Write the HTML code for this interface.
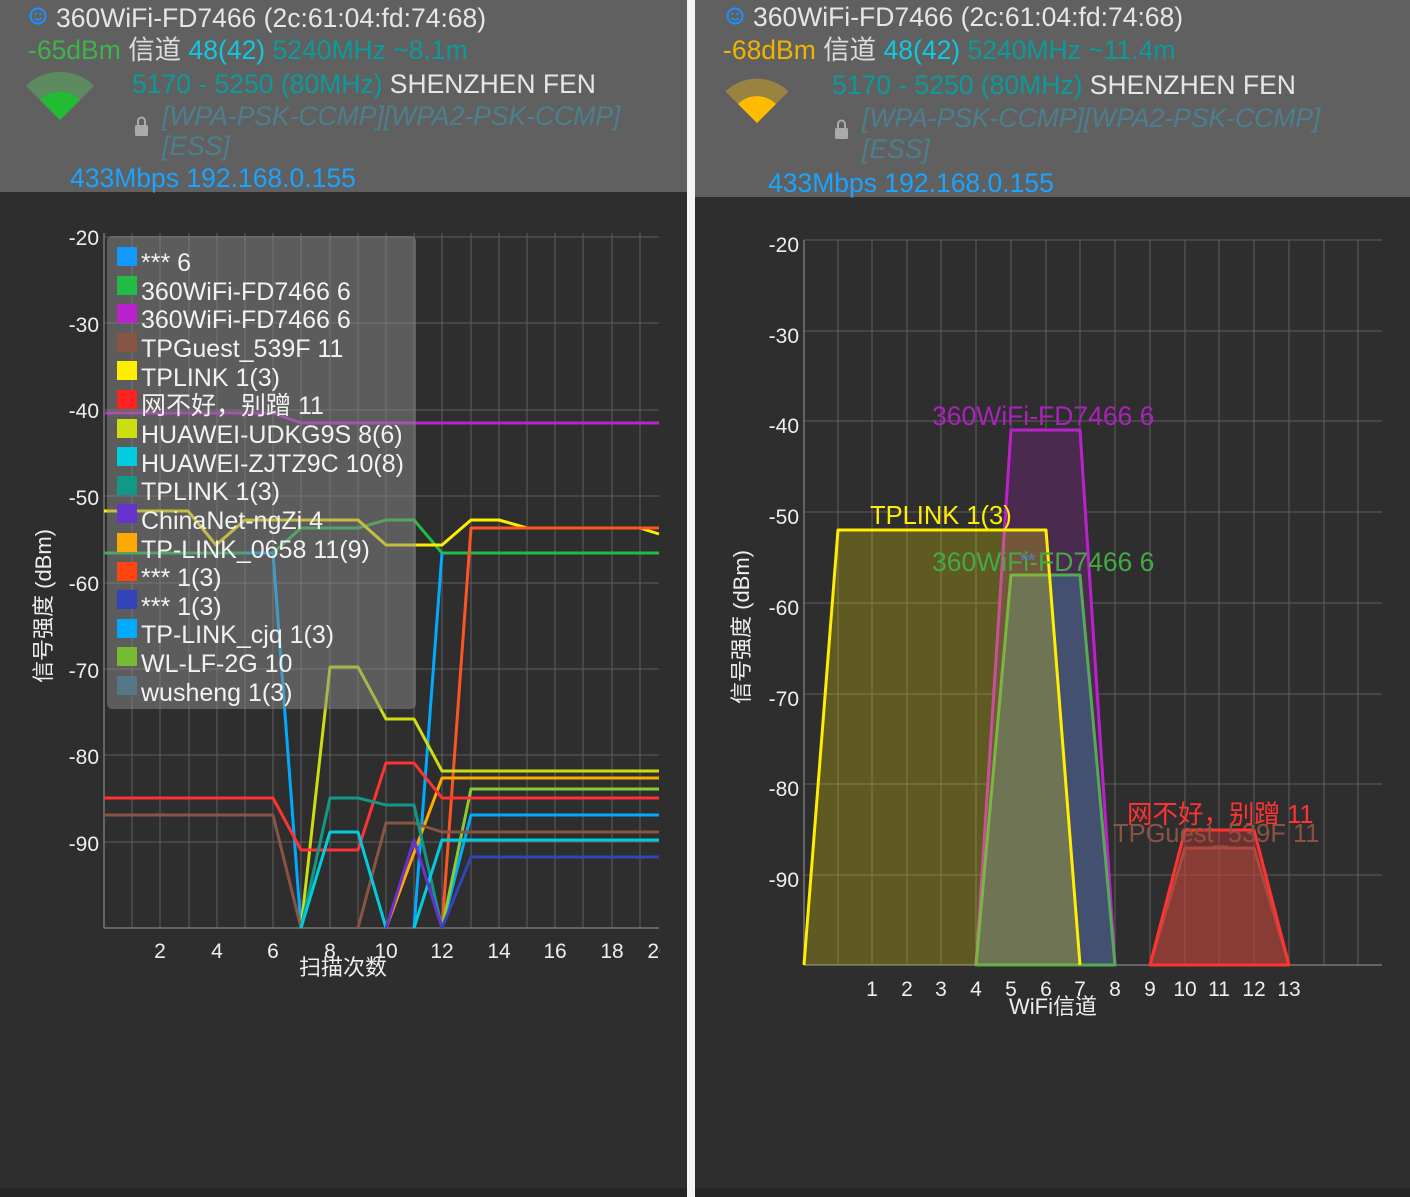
<!DOCTYPE html>
<html><head><meta charset="utf-8"><style>
html,body{margin:0;padding:0;background:#2e2e2e;}
svg{display:block;font-family:"Liberation Sans","Noto Sans CJK SC",sans-serif;}
</style></head><body>
<svg width="1410" height="1197" viewBox="0 0 1410 1197" xmlns="http://www.w3.org/2000/svg">
<rect x="0" y="0" width="1410" height="1197" fill="#2e2e2e"/>
<rect x="0" y="1188" width="1410" height="9" fill="#262626"/>
<rect x="687" y="0" width="8" height="1197" fill="#f4f4f4"/>
<rect x="0" y="0" width="687" height="192" fill="#606060"/>
<rect x="695" y="0" width="715" height="197" fill="#606060"/>

<g font-size="26.5">
<circle cx="38" cy="16" r="7.5" fill="none" stroke="#1e90ff" stroke-width="2"/>
<circle cx="35.5" cy="14" r="1.2" fill="#1e90ff"/><circle cx="40.5" cy="14" r="1.2" fill="#1e90ff"/>
<path d="M34.5 18 Q38 21.5 41.5 18" stroke="#1e90ff" stroke-width="1.6" fill="none"/>
<text x="56" y="27" fill="#e6e6e6">360WiFi-FD7466 (2c:61:04:fd:74:68)</text>
<text x="28" y="59"><tspan fill="#3cb44a">-65dBm</tspan><tspan fill="#dddddd"> 信道 </tspan><tspan fill="#10c8e0">48(42)</tspan><tspan fill="#0c9a9a"> 5240MHz ~8.1m</tspan></text>
<path d="M60 120 L26 86 A48 48 0 0 1 94 86 Z" fill="#5e8a60"/>
<path d="M60 120 L40 100 A28 28 0 0 1 80 100 Z" fill="#22bb33"/>
<text x="132" y="93"><tspan fill="#0c9a9a">5170 - 5250 (80MHz)</tspan><tspan fill="#e6e6e6"> SHENZHEN FEN</tspan></text>
<rect x="135" y="125" width="13" height="11" rx="1.5" fill="#aaaaaa"/>
<path d="M138 125 V121 A3.5 3.5 0 0 1 145 121 V125" stroke="#aaaaaa" stroke-width="2" fill="none"/>
<text x="162" y="125" fill="#4c7f8e" font-style="italic">[WPA-PSK-CCMP][WPA2-PSK-CCMP]</text>
<text x="162" y="155" fill="#4c7f8e" font-style="italic">[ESS]</text>
<text x="70" y="187" fill="#1aa3ff">433Mbps 192.168.0.155</text>

<circle cx="735" cy="16" r="7.5" fill="none" stroke="#1e90ff" stroke-width="2"/>
<circle cx="732.5" cy="14" r="1.2" fill="#1e90ff"/><circle cx="737.5" cy="14" r="1.2" fill="#1e90ff"/>
<path d="M731.5 18 Q735 21.5 738.5 18" stroke="#1e90ff" stroke-width="1.6" fill="none"/>
<text x="753" y="26" fill="#e6e6e6">360WiFi-FD7466 (2c:61:04:fd:74:68)</text>
<text x="723" y="59"><tspan fill="#f0b400">-68dBm</tspan><tspan fill="#dddddd"> 信道 </tspan><tspan fill="#10c8e0">48(42)</tspan><tspan fill="#0c9a9a"> 5240MHz ~11.4m</tspan></text>
<path d="M757 123 L725.5 91.5 A45 45 0 0 1 788.5 91.5 Z" fill="#9a8340"/>
<path d="M757 123 L738 104 A27 27 0 0 1 776 104 Z" fill="#ffbb00"/>
<text x="832" y="94"><tspan fill="#0c9a9a">5170 - 5250 (80MHz)</tspan><tspan fill="#e6e6e6"> SHENZHEN FEN</tspan></text>
<rect x="835" y="128" width="13" height="11" rx="1.5" fill="#aaaaaa"/>
<path d="M838 128 V124 A3.5 3.5 0 0 1 845 124 V128" stroke="#aaaaaa" stroke-width="2" fill="none"/>
<text x="862" y="127" fill="#4c7f8e" font-style="italic">[WPA-PSK-CCMP][WPA2-PSK-CCMP]</text>
<text x="862" y="158" fill="#4c7f8e" font-style="italic">[ESS]</text>
<text x="768" y="192" fill="#1aa3ff">433Mbps 192.168.0.155</text>
</g>

<g stroke="#5e5e5e" stroke-width="1">
<line x1="104" y1="237" x2="659" y2="237"/><line x1="104" y1="323" x2="659" y2="323"/>
<line x1="104" y1="410" x2="659" y2="410"/><line x1="104" y1="496" x2="659" y2="496"/>
<line x1="104" y1="583" x2="659" y2="583"/><line x1="104" y1="669" x2="659" y2="669"/>
<line x1="104" y1="755" x2="659" y2="755"/><line x1="104" y1="842" x2="659" y2="842"/>
<line x1="132" y1="233" x2="132" y2="928"/><line x1="160" y1="233" x2="160" y2="928"/>
<line x1="189" y1="233" x2="189" y2="928"/><line x1="217" y1="233" x2="217" y2="928"/>
<line x1="245" y1="233" x2="245" y2="928"/><line x1="273" y1="233" x2="273" y2="928"/>
<line x1="301" y1="233" x2="301" y2="928"/><line x1="330" y1="233" x2="330" y2="928"/>
<line x1="358" y1="233" x2="358" y2="928"/><line x1="386" y1="233" x2="386" y2="928"/>
<line x1="414" y1="233" x2="414" y2="928"/><line x1="442" y1="233" x2="442" y2="928"/>
<line x1="471" y1="233" x2="471" y2="928"/><line x1="499" y1="233" x2="499" y2="928"/>
<line x1="527" y1="233" x2="527" y2="928"/><line x1="555" y1="233" x2="555" y2="928"/>
<line x1="583" y1="233" x2="583" y2="928"/><line x1="612" y1="233" x2="612" y2="928"/>
<line x1="640" y1="233" x2="640" y2="928"/>
</g>
<g stroke="#777" stroke-width="1.5"><line x1="104" y1="233" x2="104" y2="928"/><line x1="104" y1="928" x2="659" y2="928"/></g>

<g fill="none" stroke-width="3" stroke-linejoin="round">
<polyline stroke="#bb22cc" points="104,413 273,413 301,423 659,423"/>
<polyline stroke="#22bb44" points="104,553 273,553 301,528 358,528 386,520 414,520 442,553 659,553"/>
<polyline stroke="#ffee00" points="104,511 188,511 216,545 245,520 358,520 386,545 442,545 471,520 499,520 527,528 640,528 659,534"/>
<polyline stroke="#00aaff" points="245,553 273,553 301,928"/>
<polyline stroke="#00aaff" points="414,928 442,553"/>
<polyline stroke="#00aaff" points="442,928 471,815 659,815"/>
<polyline stroke="#ff5522" points="442,928 471,528 659,528"/>
<polyline stroke="#ccdd11" points="301,928 330,667 358,667 386,719 414,719 442,771 659,771"/>
<polyline stroke="#ffaa00" points="386,928 442,778 659,778"/>
<polyline stroke="#88cc33" points="442,928 471,789 659,789"/>
<polyline stroke="#ff3333" points="104,798 273,798 301,850 358,850 386,763 414,763 442,798 659,798"/>
<polyline stroke="#885544" points="104,815 273,815 301,928"/>
<polyline stroke="#885544" points="358,928 386,823 414,823 442,832 659,832"/>
<polyline stroke="#119988" points="301,928 330,798 358,798 386,805 414,805 442,928"/>
<polyline stroke="#00ccdd" points="301,928 330,832 358,832 386,928"/>
<polyline stroke="#00ccdd" points="414,928 442,840 659,840"/>
<polyline stroke="#6633cc" points="386,928 414,840 442,928"/>
<polyline stroke="#3344bb" points="442,928 471,857 659,857"/>
</g>

<rect x="107" y="236" width="309" height="473" rx="5" fill="#8a8a8a" fill-opacity="0.5"/>
<g font-size="25" fill="#f2f2f2">
<rect x="117" y="247" width="20" height="19" fill="#1199ff"/><text x="141" y="271">*** 6</text>
<rect x="117" y="276" width="20" height="19" fill="#22bb44"/><text x="141" y="300">360WiFi-FD7466 6</text>
<rect x="117" y="304" width="20" height="19" fill="#bb22cc"/><text x="141" y="328">360WiFi-FD7466 6</text>
<rect x="117" y="333" width="20" height="19" fill="#885544"/><text x="141" y="357">TPGuest_539F 11</text>
<rect x="117" y="361" width="20" height="19" fill="#ffee00"/><text x="141" y="386">TPLINK 1(3)</text>
<rect x="117" y="390" width="20" height="19" fill="#ff2222"/><text x="141" y="414">网不好，别蹭 11</text>
<rect x="117" y="419" width="20" height="19" fill="#ccdd11"/><text x="141" y="443">HUAWEI-UDKG9S 8(6)</text>
<rect x="117" y="447" width="20" height="19" fill="#00ccdd"/><text x="141" y="472">HUAWEI-ZJTZ9C 10(8)</text>
<rect x="117" y="476" width="20" height="19" fill="#119988"/><text x="141" y="500">TPLINK 1(3)</text>
<rect x="117" y="504" width="20" height="19" fill="#6633cc"/><text x="141" y="529">ChinaNet-ngZi 4</text>
<rect x="117" y="533" width="20" height="19" fill="#ffaa00"/><text x="141" y="558">TP-LINK_0658 11(9)</text>
<rect x="117" y="562" width="20" height="19" fill="#ff4411"/><text x="141" y="586">*** 1(3)</text>
<rect x="117" y="590" width="20" height="19" fill="#3344bb"/><text x="141" y="615">*** 1(3)</text>
<rect x="117" y="619" width="20" height="19" fill="#00aaff"/><text x="141" y="643">TP-LINK_cjq 1(3)</text>
<rect x="117" y="647" width="20" height="19" fill="#77bb33"/><text x="141" y="672">WL-LF-2G 10</text>
<rect x="117" y="676" width="20" height="19" fill="#557788"/><text x="141" y="701">wusheng 1(3)</text>
</g>

<g font-size="21" fill="#eeeeee" text-anchor="end">
<text x="99" y="245">-20</text><text x="99" y="332">-30</text><text x="99" y="418">-40</text>
<text x="99" y="505">-50</text><text x="99" y="591">-60</text><text x="99" y="678">-70</text>
<text x="99" y="764">-80</text><text x="99" y="851">-90</text>
</g>
<g font-size="21" fill="#eeeeee" text-anchor="middle">
<text x="160" y="958">2</text><text x="217" y="958">4</text><text x="273" y="958">6</text>
<text x="330" y="958">8</text><text x="386" y="958">10</text><text x="442" y="958">12</text>
<text x="499" y="958">14</text><text x="555" y="958">16</text><text x="612" y="958">18</text>
<text x="659" y="958">20</text>
<text x="343" y="975" font-size="22">扫描次数</text>
</g>
<rect x="660" y="935" width="27" height="30" fill="#2e2e2e"/>
<text transform="translate(51,606) rotate(-90)" font-size="22" fill="#eeeeee" text-anchor="middle">信号强度 (dBm)</text>

<g stroke="#5e5e5e" stroke-width="1">
<line x1="804" y1="240" x2="1382" y2="240"/><line x1="804" y1="331" x2="1382" y2="331"/>
<line x1="804" y1="421" x2="1382" y2="421"/><line x1="804" y1="512" x2="1382" y2="512"/>
<line x1="804" y1="603" x2="1382" y2="603"/><line x1="804" y1="694" x2="1382" y2="694"/>
<line x1="804" y1="784" x2="1382" y2="784"/><line x1="804" y1="875" x2="1382" y2="875"/>
<line x1="838" y1="240" x2="838" y2="965"/><line x1="872" y1="240" x2="872" y2="965"/>
<line x1="907" y1="240" x2="907" y2="965"/><line x1="941" y1="240" x2="941" y2="965"/>
<line x1="976" y1="240" x2="976" y2="965"/><line x1="1011" y1="240" x2="1011" y2="965"/>
<line x1="1046" y1="240" x2="1046" y2="965"/><line x1="1080" y1="240" x2="1080" y2="965"/>
<line x1="1115" y1="240" x2="1115" y2="965"/><line x1="1150" y1="240" x2="1150" y2="965"/>
<line x1="1185" y1="240" x2="1185" y2="965"/><line x1="1219" y1="240" x2="1219" y2="965"/>
<line x1="1254" y1="240" x2="1254" y2="965"/><line x1="1289" y1="240" x2="1289" y2="965"/>
<line x1="1324" y1="240" x2="1324" y2="965"/><line x1="1358" y1="240" x2="1358" y2="965"/>
</g>
<g stroke="#777" stroke-width="1.5"><line x1="804" y1="240" x2="804" y2="965"/><line x1="804" y1="965" x2="1382" y2="965"/></g>

<g stroke-width="3" stroke-linejoin="round">
<polygon points="976,965 1011,430 1080,430 1115,965" fill="#4a2a4e" stroke="none"/>
<polygon points="976,965 1011,575 1080,575 1115,965" fill="#445070" stroke="none"/>
<polygon points="976,965 1011,430 1080,430 1115,965" fill="none" stroke="#bb22cc"/>
<polygon points="976,965 1011,575 1080,575 1115,965" fill="none" stroke="#55aa55"/>
<polygon points="804,965 838,530 1046,530 1080,965" fill="#f0e000" fill-opacity="0.25" stroke="none"/>
<polyline points="804,965 838,530 1046,530 1080,965" fill="none" stroke="#ffee00"/>
<polygon points="1150,965 1185,848 1254,848 1289,965" fill="#885544" fill-opacity="0.45" stroke="#885544"/>
<polygon points="1150,965 1185,830 1254,830 1289,965" fill="#ff3333" fill-opacity="0.3" stroke="#ff3333"/>
</g>
<g font-size="26.5">
<text x="932" y="425" fill="#aa22bb">360WiFi-FD7466 6</text>
<text x="870" y="524" fill="#ffee00" font-size="25.5">TPLINK 1(3)</text>
<text x="932" y="571" fill="#44aa44">360WiFi-FD7466 6</text>
<text x="1020" y="567" fill="#4488cc" font-size="20">**</text>
<text x="1113" y="842" fill="#885544" font-size="25.5">TPGuest_539F 11</text>
<text x="1127" y="823" fill="#ff3333" font-size="25.5">网不好，别蹭 11</text>
</g>
<g font-size="21" fill="#eeeeee" text-anchor="end">
<text x="799" y="252">-20</text><text x="799" y="343">-30</text><text x="799" y="433">-40</text>
<text x="799" y="524">-50</text><text x="799" y="615">-60</text><text x="799" y="706">-70</text>
<text x="799" y="796">-80</text><text x="799" y="887">-90</text>
</g>
<g font-size="21" fill="#eeeeee" text-anchor="middle">
<text x="872" y="996">1</text><text x="907" y="996">2</text><text x="941" y="996">3</text>
<text x="976" y="996">4</text><text x="1011" y="996">5</text><text x="1046" y="996">6</text>
<text x="1080" y="996">7</text><text x="1115" y="996">8</text><text x="1150" y="996">9</text>
<text x="1185" y="996">10</text><text x="1219" y="996">11</text><text x="1254" y="996">12</text>
<text x="1289" y="996">13</text>
<text x="1053" y="1014" font-size="22">WiFi信道</text>
</g>
<text transform="translate(749,627) rotate(-90)" font-size="22" fill="#eeeeee" text-anchor="middle">信号强度 (dBm)</text>
</svg>
</body></html>
